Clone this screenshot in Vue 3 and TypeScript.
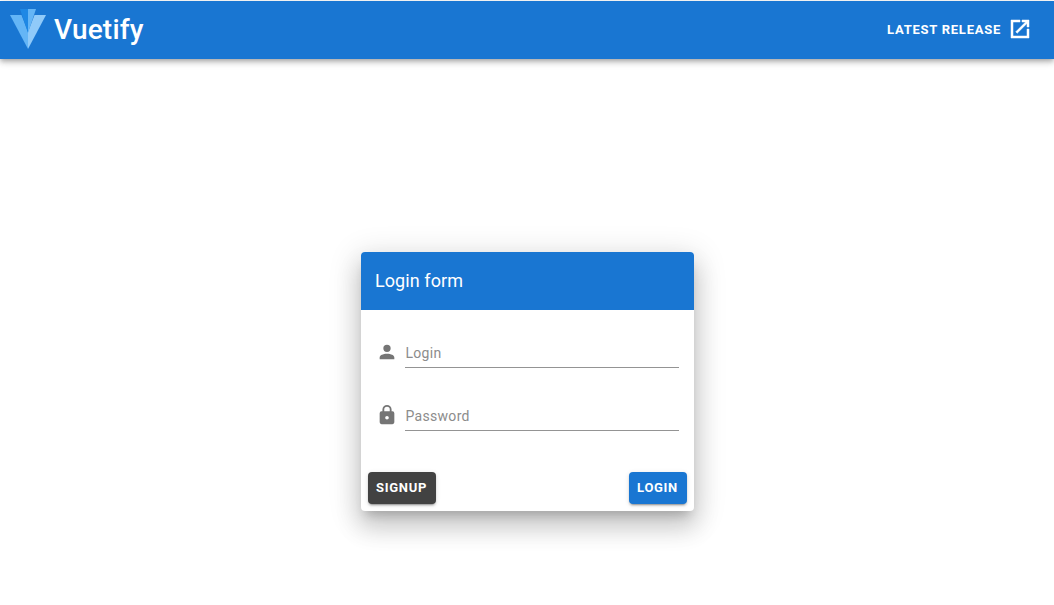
<script setup lang="ts">
const fields = [
  { label: 'Login', type: 'text', icon: 'M12 4a4 4 0 0 1 4 4 4 4 0 0 1-4 4 4 4 0 0 1-4-4 4 4 0 0 1 4-4m0 10c4.42 0 8 1.79 8 4v2H4v-2c0-2.21 3.58-4 8-4z' },
  { label: 'Password', type: 'password', icon: 'M12 17a2 2 0 0 0 2-2 2 2 0 0 0-2-2 2 2 0 0 0-2 2 2 2 0 0 0 2 2m6-9a2 2 0 0 1 2 2v10a2 2 0 0 1-2 2H6a2 2 0 0 1-2-2V10a2 2 0 0 1 2-2h1V6a5 5 0 0 1 5-5 5 5 0 0 1 5 5v2h1m-6-5a3 3 0 0 0-3 3v2h6V6a3 3 0 0 0-3-3z' },
]
</script>

<template>
  <div class="page">
    <header class="bar">
      <div class="brand">
        <svg class="logo" width="36" height="40" viewBox="0 0 36 40" aria-hidden="true">
          <path d="M0 6h11.5L18 23v17z" fill="#64b5f6" />
          <path d="M36 6H24.5L18 23v17z" fill="#90caf9" />
          <path d="M10 0h8v24z" fill="#1e88e5" />
          <path d="M26 0h-8v24z" fill="#64b5f6" />
        </svg>
        <span class="brand-name">Vuetify</span>
      </div>
      <a class="release">
        <span>Latest Release</span>
        <svg width="24" height="24" viewBox="0 0 24 24" aria-hidden="true">
          <path fill="#fff" stroke="#fff" stroke-width=".5" d="M19 19H5V5h7V3H3v18h18v-9h-2v7zM14 3v2h3.59l-9.83 9.83 1.41 1.41L19 6.41V10h2V3h-7z" />
        </svg>
      </a>
    </header>

    <main class="content">
      <section class="card">
        <div class="card-head">Login form</div>
        <form class="card-body" @submit.prevent>
          <label v-for="f in fields" :key="f.label" class="field">
            <svg class="field-icon" width="22" height="22" viewBox="0 0 24 24" aria-hidden="true">
              <path :d="f.icon" fill="#757575" />
            </svg>
            <input class="field-input" :type="f.type" :placeholder="f.label" />
          </label>
        </form>
        <div class="actions">
          <button class="btn dark" type="button">Signup</button>
          <button class="btn primary" type="button">Login</button>
        </div>
      </section>
    </main>
  </div>
</template>

<style>
html, body { margin: 0; background: #fff; }
</style>

<style scoped>
.page {
  height: 605px;
  display: flex;
  flex-direction: column;
  padding-top: 1px;
  box-sizing: border-box;
  font-family: Roboto, sans-serif;
  overflow: hidden;
}
.bar {
  height: 58px;
  flex: none;
  box-sizing: border-box;
  background: #1976d2;
  color: #fff;
  display: flex;
  align-items: center;
  justify-content: space-between;
  padding: 0 22px 0 10px;
  box-shadow: 0 2px 4px -1px rgba(0,0,0,.2), 0 4px 5px 0 rgba(0,0,0,.14), 0 1px 10px 0 rgba(0,0,0,.12);
}
.brand { display: flex; align-items: center; gap: 8px; }
.logo { display: block; margin-top: -2px; }
.brand-name { font-size: 28px; font-weight: 500; letter-spacing: .2px; margin-top: -2px; }
.release {
  display: flex;
  align-items: center;
  gap: 7px;
  font-size: 13px;
  font-weight: 700;
  letter-spacing: .75px;
  text-transform: uppercase;
  margin-top: -2px;
}
.release svg { display: block; }
.content {
  flex: 1;
  display: flex;
  align-items: flex-start;
  justify-content: center;
  padding-top: 193px;
}
.card {
  width: 333px;
  height: 259px;
  border-radius: 4px;
  background: #fff;
  display: flex;
  flex-direction: column;
  box-shadow: 0 8px 10px -5px rgba(0,0,0,.2), 0 16px 24px 2px rgba(0,0,0,.14), 0 6px 30px 5px rgba(0,0,0,.12);
}
.card-head {
  height: 58px;
  flex: none;
  box-sizing: border-box;
  display: flex;
  align-items: center;
  padding: 0 0 2px 14.5px;
  background: #1976d2;
  color: #fff;
  font-size: 18px;
  font-weight: 400;
  letter-spacing: .08px;
  border-radius: 4px 4px 0 0;
}
.card-body {
  flex: 1;
  padding: 25px 15px 0 15px;
  display: flex;
  flex-direction: column;
  gap: 30px;
}
.field { display: flex; align-items: center; gap: 7px; height: 33px; }
.field-icon { flex: none; margin-top: 1px; }
.field-input {
  flex: 1;
  min-width: 0;
  height: 33px;
  box-sizing: border-box;
  border: 0;
  border-bottom: 1px solid #949494;
  outline: none;
  background: transparent;
  padding: 4px 0 0 1px;
  font-family: Roboto, sans-serif;
  font-size: 14px;
  letter-spacing: .3px;
  color: #333;
}
.field-input::placeholder { color: #8c8c8c; opacity: 1; }
.actions {
  flex: none;
  display: flex;
  justify-content: space-between;
  padding: 0 7px 7px;
}
.btn {
  height: 32px;
  border: 0;
  border-radius: 4px;
  color: #fff;
  padding: 0 8.5px 1px;
  font-family: Roboto, sans-serif;
  font-size: 13px;
  font-weight: 700;
  letter-spacing: .7px;
  text-transform: uppercase;
  box-shadow: 0 3px 1px -2px rgba(0,0,0,.2), 0 2px 2px 0 rgba(0,0,0,.14), 0 1px 5px 0 rgba(0,0,0,.12);
}
.dark { background: #424242; }
.primary { background: #1976d2; }
</style>
